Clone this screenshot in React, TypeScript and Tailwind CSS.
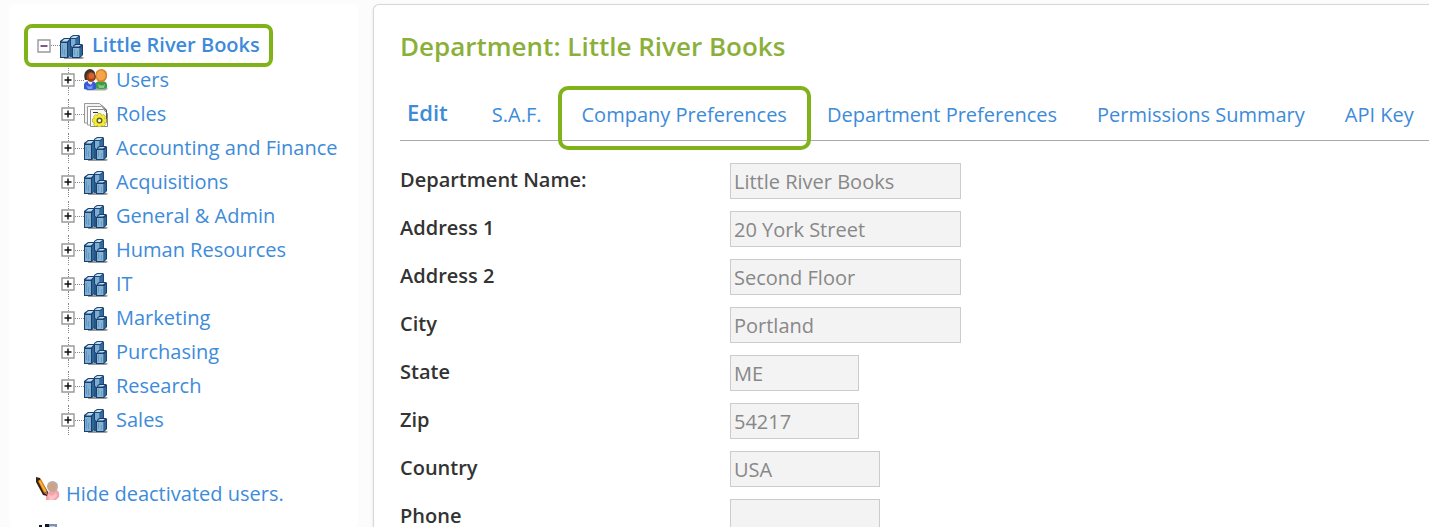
import type { ReactNode } from 'react'

function DepartmentIcon() {
  return (
    <svg viewBox="0 0 24 24" className="size-6 shrink-0" aria-hidden="true">
      <path d="M4 22h19l1 1-2 1H4z" fill="#9a9a9a" />
      <path d="M10 2l3-2h6l1 1v10H10z" fill="#1c4a78" />
      <path d="M11 2.500L13.500 1h5L16 3h-5z" fill="#c3dcf3" />
      <path d="M11 4h4.500v7H11z" fill="#7fadd2" />
      <path d="M16 4l3-2v8h-3z" fill="#34699b" />
      <path d="M0 6l4-3h6l1 1v16l-3 3H0z" fill="#164070" />
      <path d="M1.500 6.500L4.500 4h5L7 6.500z" fill="#c3dcf3" />
      <path d="M1 8h6v14H1z" fill="#80aed0" />
      <path d="M2 10h1v9H2zM4 14h1v6H4z" fill="#6496bf" />
      <path d="M8 7.500L10 5v15l-2 2z" fill="#2f6597" />
      <path d="M12 12l3-3h7l1 1v10l-3 3h-8z" fill="#164070" />
      <path d="M13.500 11.500L16 10h5l-2 1.500z" fill="#c3dcf3" />
      <path d="M13 13h6.500v9H13z" fill="#88b4d3" />
      <path d="M14 14h1v6h-1zM17 16h1v5h-1z" fill="#6b9dc3" />
      <path d="M20 13l2-2v9l-2 2z" fill="#2f6597" />
      <path d="M10 11h2v11h-2z" fill="#245687" />
    </svg>
  )
}

function UsersIcon() {
  return (
    <svg viewBox="0 0 24 24" className="size-6 shrink-0" aria-hidden="true">
      <path d="M2 19h21l1 1-3 1.500H3z" fill="#a9a9a9" />
      <path d="M11 19v-4q1-3 6-3 6 0 6 4v3q-5 2-12 0z" fill="#3f9a4e" />
      <path d="M14 15q4 3 7 0l-1 4h-5z" fill="#79cf7c" />
      <path d="M12 3q2-3 6-3 6 1 5 8-1 5-6 5-4 0-5-4z" fill="#d8822a" />
      <ellipse cx="17" cy="6.500" rx="4.500" ry="5" fill="#f3a54c" />
      <path d="M0 20v-5q1-3 6-3 6 0 6 4v4q-6 2-12 0z" fill="#3659d4" />
      <path d="M2 16q4 3 7 0l-1 4H4z" fill="#7898fa" />
      <path d="M4 12h5l-2 4-3-2z" fill="#e8eeff" />
      <path d="M1 11Q-1 5 2 2q4-4 8 0 3 4 1 9z" fill="#393331" />
      <ellipse cx="7" cy="8" rx="4.500" ry="5" fill="#a53f12" />
      <ellipse cx="7.500" cy="7" rx="2.800" ry="3" fill="#d1652a" />
    </svg>
  )
}

function RolesIcon() {
  return (
    <svg viewBox="0 0 24 24" className="size-6 shrink-0" aria-hidden="true">
      <path d="M.5.500h15l3 3V20H.500z" fill="#f3f3f3" stroke="#999" />
      <path d="M3.500 3.500h14l3 3V22h-17z" fill="#fff" stroke="#999" />
      <path d="M6.500 6.500h13l4 4v13h-17z" fill="#f8f8f8" stroke="#888" />
      <path d="M17 1l6 6v14l-1-3V8z" fill="#555" />
      <path d="M9 9.500h5" stroke="#333" />
      <path
        d="M14 10.500h3l.5 2 2-1 2 2-1 2 2 .5v3l-2 .5 1 2-2 2-2-1-.5 1.500h-3l-.5-1.500-2 1-2-2 1-2-2-.5v-3l2-.5-1-2 2-2 2 1z"
        fill="#f2ed32"
        stroke="#a79f25"
        strokeWidth=".6"
      />
      <circle cx="15.500" cy="17.500" r="2.300" fill="#fff" stroke="#655f28" strokeWidth="1.500" />
    </svg>
  )
}

function EditUserIcon() {
  return (
    <svg viewBox="0 0 24 24" className="size-6 shrink-0" aria-hidden="true">
      <path d="M10 23q-1-8 4-9l7-1q3 2 2 7l-3 3z" fill="#f5a4ab" />
      <path d="M12 17q4 4 8-1l1 3-4 4h-4z" fill="#ffc1c3" />
      <circle cx="16.500" cy="9.500" r="5.500" fill="#b9ada7" />
      <circle cx="16" cy="10" r="3.800" fill="#cda382" />
      <path d="M0 0l4 1 8 14-1 4-4-1L0 5z" fill="#352313" />
      <path d="M2 4l3-2 6 12-3 2z" fill="#e98a18" />
      <path d="M3 4l1-.5 6 11-1 .5z" fill="#ffc451" />
      <path d="M8 16l3-2v4z" fill="#bd6c55" />
    </svg>
  )
}

function ReportIcon() {
  return (
    <svg viewBox="0 0 24 24" className="size-6 shrink-0" aria-hidden="true">
      <path d="M3 1h3v9H3zM9 0h4v10H9z" fill="#111827" />
      <path d="M13 0h8v18h-8z" fill="#7891b4" />
      <path d="M14 2h5v14h-5z" fill="#c1d1e5" />
    </svg>
  )
}

function Toggle({ name, open }: { name: string; open?: boolean }) {
  return (
    <button
      type="button"
      aria-label={open ? `Collapse ${name}` : `Expand ${name}`}
      aria-expanded={!!open}
      className="size-3.5 shrink-0"
    >
      <svg viewBox="0 0 14 14" className="block size-3.5">
        <path d="M1 1h12v12H1z" fill="#fff" stroke="#999" strokeWidth="1.400" />
        <path d="M3.500 7h7" stroke={open ? '#552266' : '#111'} strokeWidth="1.500" />
        {!open && <path d="M7 3.500v7" stroke="#111" strokeWidth="1.500" />}
      </svg>
    </button>
  )
}

const link = 'text-[#3d8bd9] whitespace-nowrap hover:underline'

function TreeRow({ name, icon }: { name: string; icon: ReactNode }) {
  return (
    <li className="flex h-[34px] items-center">
      <div className="flex h-full w-3.5 shrink-0 flex-col items-center py-0.5">
        <span className="flex-1 border-l border-dotted border-[#888]" />
        <Toggle name={name} />
        <span className="flex-1 border-l border-dotted border-[#888]" />
      </div>
      <span className="w-[9px] border-t border-dotted border-[#888]" />
      <span className="mt-0.5">{icon}</span>
      <a href="#" className={`ml-2 ${link}`}>{name}</a>
    </li>
  )
}

const departments = [
  'Accounting and Finance',
  'Acquisitions',
  'General & Admin',
  'Human Resources',
  'IT',
  'Marketing',
  'Purchasing',
  'Research',
  'Sales',
]

const tabs = [
  'S.A.F.',
  'Company Preferences',
  'Department Preferences',
  'Permissions Summary',
  'API Key',
]

const fields = [
  { id: 'name', label: 'Department Name:', value: 'Little River Books', width: 'w-[231px]' },
  { id: 'address1', label: 'Address 1', value: '20 York Street', width: 'w-[231px]' },
  { id: 'address2', label: 'Address 2', value: 'Second Floor', width: 'w-[231px]' },
  { id: 'city', label: 'City', value: 'Portland', width: 'w-[231px]' },
  { id: 'state', label: 'State', value: 'ME', width: 'w-[129px]' },
  { id: 'zip', label: 'Zip', value: '54217', width: 'w-[129px]' },
  { id: 'country', label: 'Country', value: 'USA', width: 'w-[150px]' },
  { id: 'phone', label: 'Phone', value: '', width: 'w-[150px]' },
]

export default function App() {
  return (
    <div className="flex h-screen overflow-hidden bg-[#fcfcfc] pt-1 pl-[9px] font-['Open_Sans',sans-serif] text-[20px] leading-7">
      <aside className="w-[349px] shrink-0 rounded-md bg-white px-[15px] pt-5">
        <div className="flex h-[43px] w-[249px] items-center rounded-lg border-4 border-[#80b31a] pl-[9px]">
          <Toggle name="Little River Books" open />
          <span className="w-[9px] border-t border-dotted border-[#888]" />
          <span className="mt-0.5"><DepartmentIcon /></span>
          <a href="#" className={`ml-2 pb-0.5 font-semibold ${link}`}>Little River Books</a>
        </div>
        <ul className="-mt-1 pl-[37px]">
          <TreeRow name="Users" icon={<UsersIcon />} />
          <TreeRow name="Roles" icon={<RolesIcon />} />
          {departments.map((name) => (
            <TreeRow key={name} name={name} icon={<DepartmentIcon />} />
          ))}
        </ul>
        <div className="mt-10 flex items-start pl-3">
          <EditUserIcon />
          <a href="#" className={`mt-[3px] ml-1.5 ${link}`}>Hide deactivated users.</a>
        </div>
        <div className="mt-4 pl-3">
          <ReportIcon />
        </div>
      </aside>

      <main className="ml-[15px] min-w-0 flex-1 rounded-tl-md border-t border-l border-[#d8d8d8] bg-white pt-[23px] pl-[26px] shadow-sm">
        <h1 className="text-[26px] leading-9 font-semibold text-[#8bb03a]">Department: Little River Books</h1>
        <nav className="mt-[21px] flex h-14 items-center border-b border-[#aaa]">
          <a href="#" className={`pr-6 pb-0.5 pl-[7px] text-[22px] font-semibold ${link}`}>Edit</a>
          {tabs.map((tab) => (
            <a key={tab} href="#" className={`relative px-5 pt-1 ${link}`}>
              {tab}
              {tab === 'Company Preferences' && (
                <span className="absolute -inset-x-1 -top-[11px] -bottom-[21px] rounded-[10px] border-4 border-[#80b31a]" />
              )}
            </a>
          ))}
        </nav>
        <form className="mt-[22px] flex flex-col gap-3">
          {fields.map((field) => (
            <div key={field.id} className="flex h-9 items-center">
              <label htmlFor={field.id} className="w-[330px] shrink-0 pb-0.5 font-semibold text-[#333]">
                {field.label}
              </label>
              <input
                id={field.id}
                type="text"
                defaultValue={field.value}
                disabled
                className={`h-9 border border-[#ccc] bg-[#f3f3f3] px-[3px] text-[#888] ${field.width}`}
              />
            </div>
          ))}
        </form>
      </main>
    </div>
  )
}
